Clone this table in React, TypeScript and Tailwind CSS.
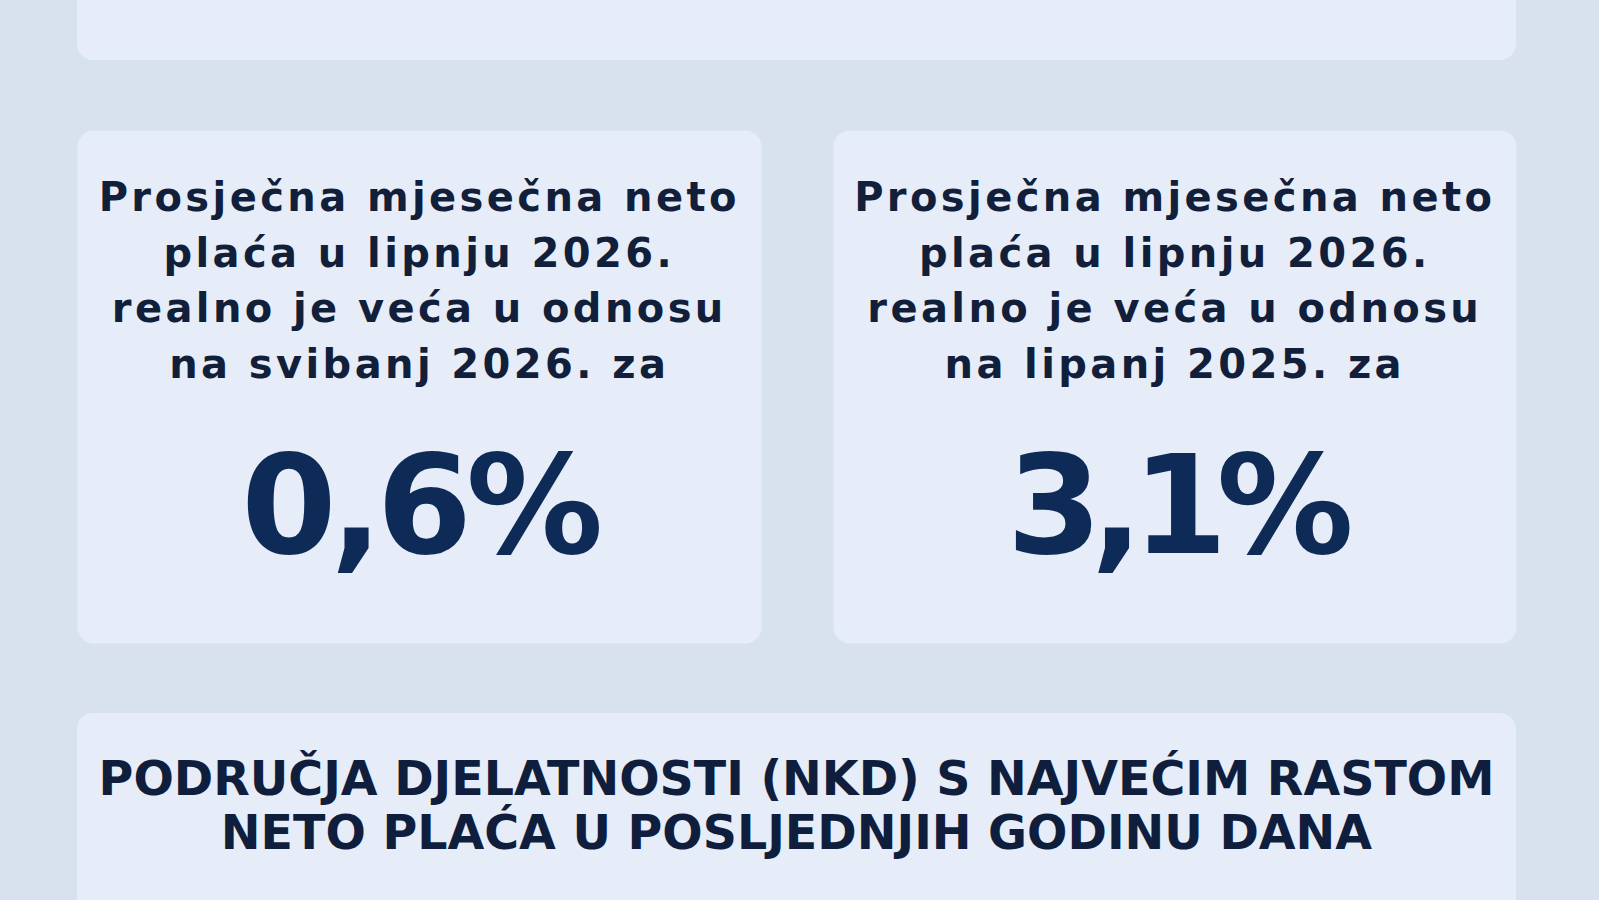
import React from "react";

function StatCard({
  lines,
  value,
  tight,
}: {
  lines: string[];
  value: string;
  tight?: boolean;
}) {
  return (
    <div className="h-[512px] rounded-[16px] bg-[#e7edf8] shadow-[0_0_2px_rgba(255,255,255,0.6)] pt-[39px] flex flex-col items-center text-center">
      <div className="text-[40px] leading-[55.5px] font-bold tracking-[3.4px] text-[#121f3a] whitespace-nowrap">
        {lines.map((l) => (
          <div key={l}>{l}</div>
        ))}
      </div>
      <div
        className={
          tight
            ? "mt-[45px] text-[137px] leading-[137px] font-bold tracking-[-11px] text-[#0e2a57] whitespace-nowrap"
            : "mt-[45px] text-[137px] leading-[137px] font-bold tracking-[-6px] text-[#0e2a57] whitespace-nowrap"
        }
      >
        {value}
      </div>
    </div>
  );
}

export default function App() {
  return (
    <div className="h-[900px] overflow-hidden bg-[#d8e2ef] pl-[77px] pr-[83px] font-['DejaVu_Sans',sans-serif]">
      <div className="-mt-[200px] h-[260px] rounded-[16px] bg-[#e7edf8]" />
      <div className="mt-[71px] grid grid-cols-2 gap-[73px] pl-[1px]">
        <StatCard
          lines={[
            "Prosječna mjesečna neto",
            "plaća u lipnju 2026.",
            "realno je veća u odnosu",
            "na svibanj 2026. za",
          ]}
          value="0,6%"
        />
        <StatCard
          lines={[
            "Prosječna mjesečna neto",
            "plaća u lipnju 2026.",
            "realno je veća u odnosu",
            "na lipanj 2025. za",
          ]}
          value="3,1%"
          tight
        />
      </div>
      <div className="mt-[70px] h-[300px] rounded-[16px] bg-[#e7edf8] pt-[39px] text-center">
        <div className="text-[47.5px] leading-[54px] font-bold text-[#0f1e3c] whitespace-nowrap">
          <div>PODRUČJA DJELATNOSTI (NKD) S NAJVEĆIM RASTOM</div>
          <div>NETO PLAĆA U POSLJEDNJIH GODINU DANA</div>
        </div>
      </div>
    </div>
  );
}
